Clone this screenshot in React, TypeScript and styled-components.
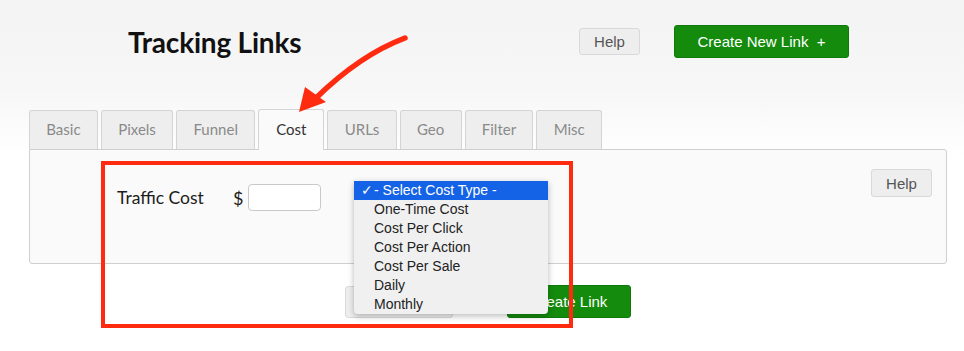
import React from "react";
import styled, { createGlobalStyle } from "styled-components";

const GlobalStyle = createGlobalStyle`
  html, body {
    margin: 0;
    padding: 0;
  }
  body {
    background: linear-gradient(#f3f3f3 0px, #f7f7f7 90px, #ffffff 160px);
    font-family: Lato, "Open Sans", sans-serif;
    min-height: 351px;
  }
`;

const Page = styled.div`
  position: relative;
  width: 964px;
  height: 351px;
  overflow: hidden;
`;

const Header = styled.div`
  display: flex;
  align-items: center;
  padding: 25px 0 0 128px;
  height: 33px;
`;

const Title = styled.h1`
  flex: 0 0 451px;
  margin: 0;
  font-family: Lato, sans-serif;
  font-weight: 700;
  font-size: 28px;
  color: #111;
  letter-spacing: -0.2px;
`;

const GrayButton = styled.button<{ $w: number; $h: number }>`
  width: ${(p) => p.$w}px;
  height: ${(p) => p.$h}px;
  border: 1px solid #d9d9d9;
  border-radius: 3px;
  background: #eeeeee;
  color: #555;
  font-family: "Liberation Sans", Arial, sans-serif;
  font-size: 15px;
  padding: 0;
`;

const GreenButton = styled.button<{ $w: number }>`
  width: ${(p) => p.$w}px;
  height: 33px;
  border: 1px solid #0f7a09;
  border-radius: 3px;
  background: #148b0d;
  color: #fff;
  font-family: "Liberation Sans", Arial, sans-serif;
  font-size: 15px;
  padding: 0;
`;

const HeaderGreen = styled(GreenButton)`
  margin-left: 34px;
`;

const Tabs = styled.div`
  display: flex;
  align-items: flex-end;
  gap: 3px;
  margin-top: 51px;
  padding-left: 29px;
  height: 40px;
`;

const Tab = styled.div<{ $active?: boolean }>`
  position: relative;
  z-index: ${(p) => (p.$active ? 1 : 0)};
  height: ${(p) => (p.$active ? 41 : 39)}px;
  margin-bottom: ${(p) => (p.$active ? -1 : 0)}px;
  box-sizing: border-box;
  display: flex;
  align-items: center;
  padding: 0 ${(p) => (p.$active ? 17 : 16.3)}px 2px;
  border: 1px solid #d4d4d4;
  border-bottom: none;
  border-radius: 3px 3px 0 0;
  background: ${(p) => (p.$active ? "#fafafa" : "#eeeeee")};
  color: ${(p) => (p.$active ? "#333" : "#8a8a8a")};
  font-size: 15px;
`;

const Panel = styled.div`
  display: flex;
  justify-content: space-between;
  align-items: flex-start;
  box-sizing: border-box;
  height: 115px;
  margin: 0 17px 0 29px;
  padding: 19px 14px 0 87px;
  border: 1px solid #cfcfcf;
  border-radius: 0 3px 3px 3px;
  background: #fafafa;
`;

const FormRow = styled.div`
  display: flex;
  align-items: center;
  margin-top: 15px;
  height: 27px;
`;

const Label = styled.span`
  width: 116px;
  font-size: 17.5px;
  color: #1d1d1d;
`;

const Dollar = styled.span`
  width: 15px;
  font-size: 18px;
  color: #1d1d1d;
`;

const CostInput = styled.input`
  box-sizing: border-box;
  width: 73px;
  height: 27px;
  border: 1px solid #c9c9c9;
  border-radius: 4px;
  background: #fff;
  margin: 0 33px 0 0;
`;

const SelectAnchor = styled.div`
  position: relative;
  width: 194px;
  height: 27px;
`;

const Menu = styled.ul`
  position: absolute;
  top: -3px;
  left: 0;
  z-index: 3;
  width: 194px;
  margin: 0;
  padding: 0;
  list-style: none;
  background: #f0f0f0;
  box-shadow: 0 2px 6px rgba(0, 0, 0, 0.28);
  border-radius: 0 0 4px 4px;
  font-family: "Liberation Sans", Arial, sans-serif;
  font-size: 14px;
`;

const Option = styled.li<{ $selected?: boolean }>`
  display: flex;
  height: 19px;
  line-height: 19px;
  padding-left: 7px;
  background: ${(p) => (p.$selected ? "#1463e6" : "transparent")};
  color: ${(p) => (p.$selected ? "#fff" : "#222")};
`;

const Check = styled.span`
  width: 13px;
`;

const BottomRow = styled.div`
  display: flex;
  justify-content: center;
  align-items: center;
  gap: 54px;
  margin: 21px 17px 0 29px;
`;

const Annotation = styled.div`
  position: absolute;
  left: 101px;
  top: 161px;
  width: 472px;
  height: 167px;
  box-sizing: border-box;
  border: 4px solid #ff2b10;
  z-index: 4;
  pointer-events: none;
`;

const ArrowSvg = styled.svg`
  position: absolute;
  left: 0;
  top: 0;
  z-index: 4;
  pointer-events: none;
`;

const tabs = ["Basic", "Pixels", "Funnel", "Cost", "URLs", "Geo", "Filter", "Misc"];
const options = [
  "One-Time Cost",
  "Cost Per Click",
  "Cost Per Action",
  "Cost Per Sale",
  "Daily",
  "Monthly",
];

const App = () => {
  return (
    <Page>
      <GlobalStyle />
      <Header>
        <Title>Tracking Links</Title>
        <GrayButton $w={61} $h={27}>
          Help
        </GrayButton>
        <HeaderGreen $w={175}>Create New Link&nbsp; +</HeaderGreen>
      </Header>

      <Tabs>
        {tabs.map((t) => (
          <Tab key={t} $active={t === "Cost"}>
            {t}
          </Tab>
        ))}
      </Tabs>

      <Panel>
        <FormRow>
          <Label>Traffic Cost</Label>
          <Dollar>$</Dollar>
          <CostInput />
          <SelectAnchor>
            <Menu>
              <Option $selected>
                <Check>✓</Check>- Select Cost Type -
              </Option>
              {options.map((o) => (
                <Option key={o}>
                  <Check />
                  {o}
                </Option>
              ))}
            </Menu>
          </SelectAnchor>
        </FormRow>
        <GrayButton $w={61} $h={28}>
          Help
        </GrayButton>
      </Panel>

      {/* cancel button sits under the open menu, its label is covered */}
      <BottomRow>
        <GrayButton $w={108} $h={32} aria-label="Cancel" />
        <GreenButton $w={124}>Create Link</GreenButton>
      </BottomRow>

      <Annotation />
      <ArrowSvg width="964" height="351" viewBox="0 0 964 351">
        <path
          d="M405 38 Q360 55 316 98"
          fill="none"
          stroke="#ff2b10"
          strokeWidth="5.5"
          strokeLinecap="round"
        />
        <polygon points="299,112 305,87 326,102" fill="#ff2b10" />
      </ArrowSvg>
    </Page>
  );
};

export default App;
